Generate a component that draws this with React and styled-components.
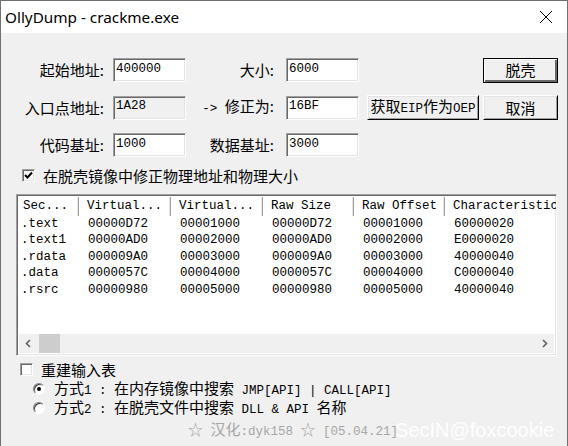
import React from "react";
import styled, { createGlobalStyle } from "styled-components";

const CJK = `"Noto Sans CJK SC", sans-serif`;
const MONO = `"Liberation Mono", "Noto Sans CJK SC", monospace`;

const GlobalStyle = createGlobalStyle`
  html, body {
    margin: 0;
    padding: 0;
    background: #f0f0f0;
  }
  body {
    width: 568px;
    height: 446px;
    overflow: hidden;
  }
`;

const Window = styled.div`
  position: relative;
  width: 568px;
  height: 446px;
  box-sizing: border-box;
  border: 1px solid #707070;
  border-bottom: none;
  background: #f0f0f0;
  display: flex;
  flex-direction: column;
  overflow: hidden;
  font-family: ${CJK};
  font-size: 15px;
  color: #000;
`;

const TitleBar = styled.div`
  height: 32px;
  flex: none;
  background: #fff;
  display: flex;
  align-items: center;
  justify-content: space-between;
  padding: 0 14px 0 4px;
  font-family: "Noto Sans", sans-serif;
  font-size: 15.3px;
`;

const Body = styled.div`
  display: flex;
  flex-direction: column;
  padding-top: 25px;
`;

const FormRow = styled.div`
  display: flex;
  align-items: center;
  height: 24px;
  padding-right: 9px;
  margin-bottom: 13.5px;
`;

const Label = styled.span`
  width: ${(p) => p.$w}px;
  margin-right: ${(p) => p.$gap}px;
  text-align: right;
  white-space: nowrap;
  line-height: 20px;
`;

const Lat = styled.span`
  font-family: ${MONO};
  font-size: 12.5px;
`;

const Field = styled.input`
  box-sizing: border-box;
  width: 73px;
  height: 24px;
  margin: 0;
  padding: 0 0 3px 2px;
  border: 1px solid;
  border-color: #a0a0a0 #fff #fff #a0a0a0;
  box-shadow: inset 1px 1px #696969, inset -1px -1px #e3e3e3;
  background: ${(p) => (p.$grey ? "#f0f0f0" : "#fff")};
  color: #000;
  font-family: ${MONO};
  font-size: 12.5px;
  outline: none;
`;

const Button = styled.button`
  box-sizing: border-box;
  width: ${(p) => p.$w}px;
  height: 25px;
  margin: 0 0 0 ${(p) => p.$ml || 0}px;
  padding: 0;
  border: 1px solid;
  border-color: ${(p) => (p.$default ? "#000" : "#fff #000 #000 #fff")};
  box-shadow: ${(p) =>
    p.$default
      ? "inset 1px 1px #fff, inset -2px -2px #696969"
      : "inset 1px 1px #e3e3e3, inset -1px -1px #a0a0a0"};
  background: #f0f0f0;
  color: #000;
  font-family: ${CJK};
  font-size: 15px;
  line-height: 20px;
  white-space: nowrap;
`;

const Spacer = styled.div`
  flex: 1;
`;

const CheckRow = styled.label`
  display: flex;
  align-items: center;
  height: 19px;
  padding-left: ${(p) => p.$indent}px;
  margin-top: ${(p) => p.$mt || 0}px;
  gap: ${(p) => p.$gap}px;
  white-space: nowrap;
  line-height: 19px;
`;

const Box = styled.span`
  box-sizing: border-box;
  width: 13px;
  height: 13px;
  flex: none;
  display: flex;
  align-items: center;
  justify-content: center;
  border: 1px solid;
  border-color: #a0a0a0 #fff #fff #a0a0a0;
  box-shadow: inset 1px 1px #696969, inset -1px -1px #e3e3e3;
  background: #fff;
`;

const Radio = styled.span`
  box-sizing: border-box;
  width: 12px;
  height: 12px;
  flex: none;
  border-radius: 50%;
  display: flex;
  align-items: center;
  justify-content: center;
  border: 1px solid;
  border-color: #808080 #fff #fff #808080;
  box-shadow: inset 1px 1px #404040;
  background: #fff;
  &::after {
    content: "";
    width: 4px;
    height: 4px;
    border-radius: 50%;
    background: ${(p) => (p.$on ? "#000" : "transparent")};
  }
`;

const List = styled.div`
  box-sizing: border-box;
  margin: 9px 0 0 15px;
  width: 541px;
  height: 162px;
  border: 1px solid;
  border-color: #a0a0a0 #fff #fff #a0a0a0;
  box-shadow: inset 1px 1px #696969, inset -1px -1px #e3e3e3;
  padding: 2px;
  background: #fff;
  display: flex;
  flex-direction: column;
  overflow: hidden;
`;

const Grid = styled.div`
  display: grid;
  grid-template-columns: 60px 92px 92px 91px 91px 130px;
  font-family: ${MONO};
  font-size: 12.5px;
  white-space: nowrap;
`;

const Head = styled(Grid)`
  height: 19px;
  flex: none;
`;

const HeadCell = styled.div`
  display: flex;
  align-items: center;
  padding-left: ${(p) => (p.$first ? 4 : 8)}px;
  border-right: 1px solid #a0a0a0;
  box-shadow: inset -1px 0 #e5e5e5;
  overflow: hidden;
`;

const Rows = styled.div`
  flex: 1;
  overflow: hidden;
`;

const DataRow = styled(Grid)`
  height: 16.5px;
  line-height: 16.5px;
`;

const Cell = styled.div`
  padding-left: ${(p) => (p.$first ? 2 : 9)}px;
  overflow: hidden;
`;

const HScroll = styled.div`
  height: 19px;
  flex: none;
  display: flex;
  align-items: stretch;
  background: #f0f0f0;
`;

const Arrow = styled.div`
  width: 18px;
  display: flex;
  align-items: center;
  justify-content: center;
`;

const Thumb = styled.div`
  width: 21px;
  margin-left: 2px;
  background: #cdcdcd;
`;

const Footer = styled.div`
  margin-top: 1px;
  padding-left: 187px;
  color: #a6a6a6;
  white-space: nowrap;
  line-height: 20px;
`;

const Watermark = styled.div`
  position: absolute;
  left: 394px;
  top: 418px;
  font-family: "Liberation Sans", sans-serif;
  font-size: 20px;
  color: rgba(255, 255, 255, 0.95);
  white-space: nowrap;
`;

const columns = ["Sec...", "Virtual...", "Virtual...", "Raw Size", "Raw Offset", "Characteristics"];

const sections = [
  [".text", "00000D72", "00001000", "00000D72", "00001000", "60000020"],
  [".text1", "00000AD0", "00002000", "00000AD0", "00002000", "E0000020"],
  [".rdata", "000009A0", "00003000", "000009A0", "00003000", "40000040"],
  [".data", "0000057C", "00004000", "0000057C", "00004000", "C0000040"],
  [".rsrc", "00000980", "00005000", "00000980", "00005000", "40000040"],
];

const Check = () => (
  <svg width="9" height="9" viewBox="0 0 9 9">
    <polyline points="1,4 3.5,6.5 8,1.5" fill="none" stroke="#000" strokeWidth="2" />
  </svg>
);

const Chevron = ({ dir }) => (
  <svg width="6" height="9" viewBox="0 0 6 9">
    <polyline
      points={dir === "left" ? "5,1 1.5,4.5 5,8" : "1,1 4.5,4.5 1,8"}
      fill="none"
      stroke="#606060"
      strokeWidth="1.6"
    />
  </svg>
);

export default function App() {
  return (
    <>
      <GlobalStyle />
      <Window>
        <TitleBar>
          <span>OllyDump - crackme.exe</span>
          <svg width="14" height="14" viewBox="0 0 14 14">
            <path d="M1 1 L13 13 M13 1 L1 13" stroke="#000" strokeWidth="1" />
          </svg>
        </TitleBar>

        <Body>
          <FormRow>
            <Label $w={103} $gap={9}>起始地址:</Label>
            <Field readOnly value="400000" />
            <Label $w={88} $gap={12}>大小:</Label>
            <Field readOnly value="6000" />
            <Spacer />
            <Button $w={75} $default>脱壳</Button>
          </FormRow>
          <FormRow>
            <Label $w={103} $gap={9}>入口点地址:</Label>
            <Field readOnly $grey value="1A28" />
            <Label $w={88} $gap={12}>
              <Lat>-&gt; </Lat>修正为:
            </Label>
            <Field readOnly value="16BF" />
            <Button $w={112} $ml={8}>
              获取<Lat>EIP</Lat>作为<Lat>OEP</Lat>
            </Button>
            <Button $w={75} $ml={4}>取消</Button>
          </FormRow>
          <FormRow>
            <Label $w={103} $gap={9}>代码基址:</Label>
            <Field readOnly value="1000" />
            <Label $w={88} $gap={12}>数据基址:</Label>
            <Field readOnly value="3000" />
          </FormRow>

          <CheckRow $indent={21} $gap={8} $mt={-5}>
            <Box>
              <Check />
            </Box>
            在脱壳镜像中修正物理地址和物理大小
          </CheckRow>

          <List>
            <Head>
              {columns.map((c, i) => (
                <HeadCell key={i} $first={i === 0}>
                  {c}
                </HeadCell>
              ))}
            </Head>
            <Rows>
              {sections.map((row, r) => (
                <DataRow key={r}>
                  {row.map((v, i) => (
                    <Cell key={i} $first={i === 0}>
                      {v}
                    </Cell>
                  ))}
                </DataRow>
              ))}
            </Rows>
            <HScroll>
              <Arrow>
                <Chevron dir="left" />
              </Arrow>
              <Thumb />
              <Spacer />
              <Arrow>
                <Chevron dir="right" />
              </Arrow>
            </HScroll>
          </List>

          <CheckRow $indent={19} $gap={8} $mt={4}>
            <Box />
            重建输入表
          </CheckRow>
          <CheckRow $indent={32} $gap={9} $mt={1}>
            <Radio $on />
            <span>
              方式<Lat>1 : </Lat>在内存镜像中搜索<Lat> JMP[API] | CALL[API]</Lat>
            </span>
          </CheckRow>
          <CheckRow $indent={32} $gap={9}>
            <Radio />
            <span>
              方式<Lat>2 : </Lat>在脱壳文件中搜索<Lat> DLL &amp; API </Lat>名称
            </span>
          </CheckRow>

          <Footer>
            ☆<Lat> </Lat>汉化<Lat>:dyk158 </Lat>☆<Lat> [05.04.21]</Lat>
          </Footer>
        </Body>
        <Watermark>SecIN@foxcookie</Watermark>
      </Window>
    </>
  );
}
